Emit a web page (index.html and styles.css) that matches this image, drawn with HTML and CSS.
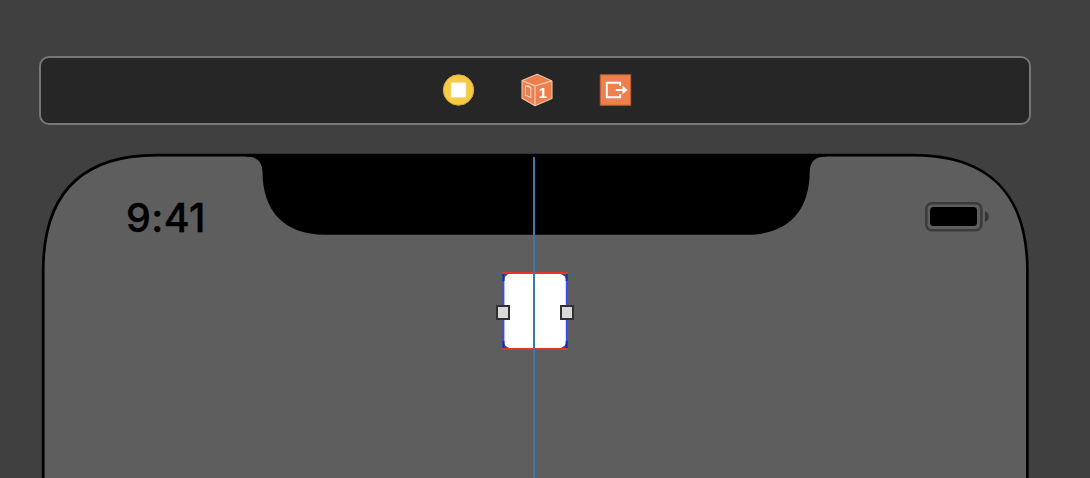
FILE: index.html
```html
<!DOCTYPE html>
<html lang="en">
<head>
<meta charset="utf-8">
<title>Storyboard canvas</title>
<link rel="stylesheet" href="styles.css">
</head>
<body>
<main class="canvas">
  <header class="scene-dock">
    <svg class="dock-icon" viewBox="0 0 34 36">
      <circle cx="17.5" cy="18" r="15.2" fill="#f5ca45" stroke="#d9ad38" stroke-width="1"/>
      <rect x="10" y="10.5" width="15" height="15" fill="#fff" stroke="#f6dc87" stroke-width="1.2" stroke-dasharray="1.5 1"/>
    </svg>
    <svg class="dock-icon" viewBox="0 0 34 36">
      <path d="M17.2 2.2L32 9V26.5L15 33.7L2 26.2V8.5Z" fill="#ee7f4d" stroke="#f3c5ae" stroke-width="1.1" stroke-linejoin="round"/>
      <path d="M2.5 8.8L15 13.8L31.5 9.2M15 14V33" fill="none" stroke="#f6cdb8" stroke-width="1.2"/>
      <path d="M5.5 14L10.8 15.8V25.5L5.5 23.4ZM5.5 14L8.5 13.8L11.8 16.4" fill="none" stroke="#f8d5c4" stroke-width="1.1"/>
      <text class="cube-number" x="18.8" y="26.4">1</text>
    </svg>
    <svg class="dock-icon" viewBox="-0.5 0 34 36">
      <rect x="1.8" y="2.8" width="30.4" height="30.4" fill="#ee804e" stroke="#bd6138" stroke-width="1"/>
      <path d="M21.7 14V10.7H8.3V25.3H21.7V22" fill="none" stroke="#fff" stroke-width="1.9"/>
      <path d="M17.3 18H26" stroke="#fff" stroke-width="2"/>
      <path d="M24 13.8L29 18L24 22.2Z" fill="#fff"/>
    </svg>
  </header>

  <section class="device">
    <svg class="bezel" viewBox="41 153 989 325">
      <path d="M43.2 482V271C43.2 192.5 83 155.2 157 155.2H913C987 155.2 1027.4 192.5 1027.4 271V482" fill="#5e5e5e" stroke="#000" stroke-width="2.7"/>
      <path d="M246 154V156.6C257 156.6 262.4 162 262.5 172C262.7 211 284 234.7 325 234.7H747C788 234.7 809.5 211 809.7 172C809.8 162 815 156.6 826 156.6V154Z" fill="#000"/>
    </svg>
    <div class="status-bar">
      <span class="time">9:41</span>
      <svg class="battery" viewBox="0 0 66 32">
        <rect x="2.3" y="2.3" width="55" height="27" rx="5.5" fill="none" stroke="#3b3b3b" stroke-width="2.5"/>
        <rect x="6" y="6" width="47" height="19" rx="3.5" fill="#000"/>
        <path d="M61 10C66 12 66 19 61 21Z" fill="#353535"/>
      </svg>
    </div>
    <svg class="selection" viewBox="0 0 80 80">
      <rect x="7.5" y="2" width="65" height="76" fill="#4b4e66"/>
      <rect x="8" y="2.5" width="64" height="75" rx="9" fill="#fff"/>
      <path d="M8.5 3V77M71.7 3V77" stroke="#3a50f5" stroke-width="1.8"/>
      <path d="M8.5 3V10M8.5 70V77M71.7 3V10M71.7 70V77" stroke="#1c2bb2" stroke-width="2"/>
      <path d="M7.3 2H73M7.3 78H73" stroke="#e63526" stroke-width="2"/>
    </svg>
  </section>
  <div class="center-guide"></div>
  <i class="handle handle-left"></i>
  <i class="handle handle-right"></i>
</main>
</body>
</html>
```
FILE: styles.css
```css
body {
  margin: 0;
  background: #404040;
}

.canvas {
  position: relative;
  box-sizing: border-box;
  width: 1090px;
  height: 478px;
  padding: 56px 59px 0 39px;
  overflow: hidden;
}

.scene-dock {
  box-sizing: border-box;
  display: flex;
  justify-content: center;
  align-items: center;
  gap: 44.5px;
  width: 992px;
  height: 69px;
  padding: 0 0 1px 3px;
  border: 2px solid #777;
  border-radius: 10px;
  background: #262626;
}

.dock-icon {
  width: 34px;
  height: 36px;
}

.cube-number {
  fill: #fff;
  font: bold 15px "Liberation Sans", sans-serif;
}

.device {
  position: relative;
  width: 989px;
  height: 325px;
  margin: 28px 0 0 2px;
}

.bezel {
  position: absolute;
  inset: 0;
  width: 989px;
  height: 325px;
}

.status-bar {
  position: relative;
  display: flex;
  justify-content: space-between;
  align-items: center;
  height: 70px;
  padding: 29px 40px 0 85px;
}

.time {
  padding-top: 1px;
  color: #000;
  font: 500 39.5px/48px Inter, sans-serif;
  letter-spacing: 0.4px;
  -webkit-text-stroke: 0.4px #000;
}

.battery {
  width: 66px;
  height: 32px;
}

.selection {
  position: absolute;
  left: 454px;
  top: 118px;
  width: 80px;
  height: 80px;
}

.center-guide {
  position: absolute;
  left: 533px;
  top: 157px;
  width: 2px;
  height: 321px;
  background: #3f77ac;
}

.handle {
  position: absolute;
  top: 305px;
  box-sizing: border-box;
  width: 14px;
  height: 15px;
  border: 2px solid #303030;
  background: #d9d9d9;
}

.handle-left {
  left: 496px;
}

.handle-right {
  left: 560px;
}
```
